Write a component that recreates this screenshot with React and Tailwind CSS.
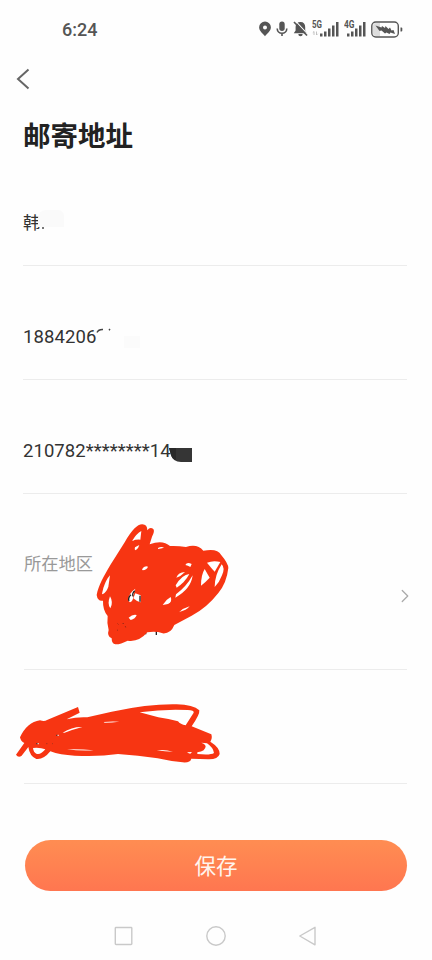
import { ChevronRight } from 'lucide-react';

const SignalBars = () => (
  <>
    <path d="M0 15h2.500v-3H0z" />
    <path d="M4 15h2.500V10H4z" />
    <path d="M8 15h2.500V7H8z" />
    <path d="M12 15h2.500V4H12z" />
    <path d="M16 15h2.500V.5H16z" />
  </>
);

const StatusBar = () => (
  <div className="flex h-[58px] items-center justify-between pl-[62px] pr-[29px] text-[#555]">
    <span className="pt-[2px] text-[18px] leading-none font-medium">6:24</span>
    <div className="flex items-center">
      {/* Location */}
      <svg width="12" height="16" viewBox="0 0 12 16" fill="currentColor">
        <path fillRule="evenodd" d="M6 .5A5.900 5.900 0 0 0 .1 6.200C.1 10 4 12.500 6 15.300c2-2.800 5.900-5.300 5.900-9.100A5.900 5.900 0 0 0 6 .5zm0 4a2 2 0 1 1 0 4 2 2 0 0 1 0-4z" />
      </svg>
      {/* Microphone */}
      <svg className="ml-[5px]" width="12" height="16" viewBox="0 0 12 16" fill="none">
        <rect x="3.300" y=".5" width="5.400" height="9.500" rx="2.700" fill="currentColor" />
        <path d="M1.200 7.500a4.800 4.800 0 0 0 9.600 0M6 12.300V15" stroke="currentColor" strokeWidth="1.600" />
      </svg>
      {/* Muted bell */}
      <svg className="ml-[5px]" width="15" height="16" viewBox="0 0 15 16" fill="none">
        <path d="M7.500 1c-3.300 0-4.900 2-4.900 5v3.500L.8 12.300h13.200l-1.800-2.800V6c0-3-1.500-5-4.700-5zM5.300 13a2.200 2.200 0 0 0 4.400 0z" fill="currentColor" />
        <path d="M2.500 0l13 14" stroke="#fff" strokeWidth="1.100" />
        <path d="M1 1l13 13.500" stroke="currentColor" strokeWidth="1.700" />
      </svg>
      {/* 5G */}
      <svg className="ml-[4px]" width="28" height="18" viewBox="0 0 28 18" fill="currentColor">
        <text x="0" y="8" fontSize="10" fontWeight="700" textLength="10" lengthAdjust="spacingAndGlyphs">5G</text>
        <path d="M2 15v-3.500M.8 12.700L2 11.500M4.500 11.500V15M5.700 13.800L4.500 15" stroke="#bbb" strokeWidth=".9" />
        <g transform="translate(8 1.500)"><SignalBars /></g>
      </svg>
      {/* 4G */}
      <svg className="ml-[4px]" width="24" height="18" viewBox="0 0 24 18" fill="currentColor">
        <text x="0" y="8" fontSize="10" fontWeight="700" textLength="10.500" lengthAdjust="spacingAndGlyphs">4G</text>
        <g transform="translate(3 1.500)"><SignalBars /></g>
      </svg>
      {/* Battery */}
      <svg className="ml-[3px]" width="32" height="17" viewBox="0 0 32 17" fill="none">
        <path d="M5 2h4v13H5a3 3 0 0 1-3-3V5a3 3 0 0 1 3-3z" fill="#ddd" />
        <rect x=".8" y="1" width="26.500" height="15" rx="4" stroke="currentColor" strokeWidth="1.400" />
        <path d="M29.500 6.500h.8a1 1 0 0 1 1 1v2a1 1 0 0 1-1 1h-.8z" fill="currentColor" />
        <path d="M4.500 4.500l6 2 .5-1.500 3 2 .5-2 3 3 1.500-1.500 1.500 3 2-.5 1.500 4-4.500-1.500-1 1.500-3-1.500-1.500 1-3.500-3-2 .5z" fill="currentColor" />
      </svg>
    </div>
  </div>
);

const Field = ({ children }) => (
  <div className="ml-[23px] mr-[25px] flex h-[114px] items-center border-b border-[#ececec] pt-7 text-[18.500px] leading-none text-[#333]">
    {children}
  </div>
);

const RegionScribble = () => (
  <svg className="absolute top-[21px] left-[61px] h-[140px] w-[155px]" viewBox="0 0 465 420">
    <path d="M182 353v5M214 347v13" stroke="#222" strokeWidth="4" />
    <path
      fill="#f73512"
      d="M35 240C40 213 57 182 76 150L120 80Q151 27 172 28Q187 28 187 46Q195 34 205 42Q210 48 201 65L194 88Q233 73 255 93Q280 92 303 96Q337 85 355 107Q398 99 408 119Q430 145 430 159Q425 204 400 234Q365 279 320 302L268 330Q257 357 233 355Q213 348 187 352Q162 382 128 377Q105 389 91 388Q80 387 80 370Q65 363 71 345Q65 323 68 303Q53 285 54 257Q38 260 35 240Z"
    />
    <g fill="#fff">
      <path d="M141 78Q155 55 169 48L166 74Q153 73 141 78z" />
      <path d="M150 97L163 90Q160 102 152 106Q147 104 150 97z" />
      <path d="M219 99Q229 94 237 98Q228 100 219 102z" />
      <path d="M171 163Q178 151 189 155Q185 165 173 166z" />
      <path d="M51 236Q59 197 75 181L70 215Q65 231 53 238z" />
      <path d="M75 244Q86 263 76 280Q66 268 75 244z" />
      <path d="M130 257Q130 235 151 221L145 240Q145 260 135 262z" />
      <path d="M151 235L167 241V262Q154 259 145 250z" />
      <path d="M131 308Q143 297 155 300Q151 312 137 315z" />
      <path d="M301 150Q306 140 320 147L316 156Q309 151 301 150z" />
      <path d="M274 188Q280 172 300 171Q288 184 274 188z" />
      <path d="M272 211Q291 179 313 177Q300 202 275 218z" />
      <path d="M273 238Q305 214 323 181Q318 222 271 248z" />
      <path d="M233 270Q242 254 257 246Q263 261 249 267z" />
      <path d="M282 292Q295 279 314 274Q303 287 285 290z" />
      <path d="M348 212Q348 180 359 162L374 188Q363 200 348 212z" />
      <path d="M366 143Q385 135 406 141L389 170Q378 158 366 143z" />
      <path d="M389 216Q389 181 410 148Q421 159 411 181Q404 201 389 216z" />
    </g>
    <path d="M132 258q-4-10 6-19M144 244q-3-10 5-17M165 242v18" fill="none" stroke="#222" strokeWidth="4" />
    <path d="M98 326l2 2M113 324l3 3M121 334l1 3M97 345l2 2" stroke="#7a2417" strokeWidth="3" />
  </svg>
);

const AddressScribble = () => (
  <svg className="absolute top-[25px] left-[-14px] h-[95px] w-[220px]" viewBox="0 0 660 285">
    <path
      fill="#f73512"
      d="M30 127Q51 82 90 76Q104 80 111 75L204 36L209 53L170 73Q203 65 232 67L305 50Q420 26 500 28Q550 29 568 46Q570 58 545 94L604 118Q608 130 601 140Q630 158 629 177Q624 194 594 193L544 191Q541 204 518 202Q477 198 443 190Q384 181 324 177Q265 186 194 182Q150 180 121 169Q100 195 79 192Q59 184 55 156L35 182Q25 190 18 179L43 144Q32 139 30 127Z"
    />
    <g fill="#fff">
      <path d="M389 52Q465 41 533 45Q553 45 551 53L527 91Q511 88 504 79Q476 71 445 67z" />
      <path d="M158 113Q186 95 217 96Q187 104 164 113z" />
      <path d="M281 81Q304 78 328 80Q305 83 284 83z" />
      <path d="M69 159Q91 157 106 163Q91 181 79 176Q70 171 69 159z" />
      <path d="M171 163Q214 162 251 166Q208 168 171 163z" />
      <path d="M440 166Q465 163 489 170Q465 170 440 166z" />
      <path d="M531 172L546 171L541 176Q536 176 531 172z" />
      <path d="M562 172Q587 169 587 153Q584 145 574 143L591 145Q610 158 612 174Q602 181 562 177z" />
    </g>
    <path d="M139 121h3M79 146h4" stroke="#333" strokeWidth="4" />
    <path d="M143 121h3M83 146h3" stroke="#fff" strokeWidth="4" />
    <path d="M109 146h3M127 146h2" stroke="#96301f" strokeWidth="3" />
  </svg>
);

const NavBar = () => (
  <div className="mt-[32px] flex justify-center gap-[70px] text-[#c9c9c9]">
    <svg width="24" height="24" viewBox="0 0 24 24" fill="none" stroke="currentColor" strokeWidth="1.400">
      <rect x="5.300" y="4.500" width="16.500" height="17" rx=".7" />
    </svg>
    <svg width="24" height="24" viewBox="0 0 24 24" fill="none" stroke="currentColor" strokeWidth="1.400">
      <circle cx="12" cy="13" r="9.200" />
    </svg>
    <svg width="24" height="24" viewBox="0 0 24 24" fill="none" stroke="currentColor" strokeWidth="1.400" strokeLinejoin="round">
      <path d="M1.800 13L17 4.300v17.500z" />
    </svg>
  </div>
);

const App = () => {
  return (
    <div className="h-[960px] w-[432px] overflow-hidden bg-[#fefefe] font-['Roboto','Noto_Sans_CJK_SC',sans-serif]">
      <StatusBar />

      {/* Header */}
      <div className="h-[94px] pt-[10px] pl-4">
        <svg width="14" height="22" viewBox="0 0 14 22" fill="none" stroke="#666" strokeWidth="2">
          <path d="M12.500 1.500L2 11l10.500 9.500" />
        </svg>
        <h1 className="mt-[27px] ml-[7px] text-[27.500px] leading-[40px] font-bold text-[#222]">邮寄地址</h1>
      </div>

      <Field>
        <div className="relative h-5 w-[50px] text-[17.500px] leading-5">
          韩
          <div className="absolute -top-[3px] left-[15px] h-[17px] w-[26px] rounded-tl-lg rounded-tr-md bg-[#fafafa]"></div>
          <span className="absolute top-[14px] left-[19px] size-[2px] bg-[#777]"></span>
        </div>
      </Field>

      <Field>
        <div className="flex items-start pt-[2px]">
          <span className="tracking-[0.1px]">1884206</span>
          <svg width="20" height="18" viewBox="0 0 20 18" fill="none" stroke="#444" strokeWidth="1.400">
            <path d="M1 4.500Q2.500 1.200 7 1.500M13 2.300L14 1" />
          </svg>
          <div className="mt-2 ml-2 h-[12px] w-4 bg-[#fbfbfb]"></div>
        </div>
      </Field>

      <Field>
        <div className="flex items-start pt-px">
          <span className="tracking-[0.050px]">210782********14</span>
          <svg className="relative top-[6px] -ml-[2px] h-[14px] w-6" viewBox="0 0 24 14">
            <path d="M0 0h23v14H12Q4 14 2 7z" fill="#353535" />
            <path d="M0 0h7v12Q3 11 2 7z" fill="#292929" />
          </svg>
        </div>
      </Field>

      {/* Region */}
      <div className="relative ml-6 mr-[25px] h-[176px] border-b border-[#ececec]">
        <span className="absolute top-[59px] left-0 text-[17.300px] leading-[22px] text-[#999]">所在地区</span>
        <RegionScribble />
        <ChevronRight className="absolute top-[91px] right-[-9px] size-[22px] text-[#aaa]" strokeWidth={1.4} />
      </div>

      {/* Street address */}
      <div className="relative ml-6 mr-[25px] h-[114px] border-b border-[#ececec]">
        <AddressScribble />
      </div>

      <button className="mt-[56px] ml-[25px] block h-[51px] w-[382px] rounded-full bg-linear-to-b from-[#ff8d52] to-[#ff7650] pt-[3px] text-[21.500px] text-[#fff5ee]">
        保存
      </button>

      <NavBar />
    </div>
  );
};

export default App;
